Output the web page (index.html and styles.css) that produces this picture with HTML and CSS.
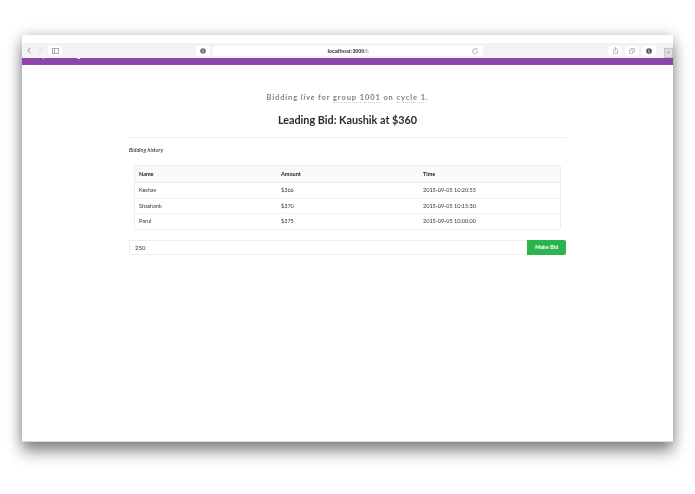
FILE: index.html
```html
<!DOCTYPE html>
<html lang="en">
<head>
<meta charset="utf-8">
<title>Bidding</title>
<link rel="stylesheet" href="styles.css">
</head>
<body>
<div class="window">
  <div class="titlebar"></div>
  <div class="toolbar">
    <div class="tb-left">
      <svg class="ico-nav" width="16" height="7" viewBox="0 0 16 7"><path d="M3.500 .8.800 3.500l2.700 2.700" fill="none" stroke="#777" stroke-width=".9"/><path d="M12 .8l2.700 2.700L12 6.200" fill="none" stroke="#d4d4d4" stroke-width=".9"/></svg>
      <div class="tb-btn tb-side"><svg width="7" height="6" viewBox="0 0 7 6"><rect x=".5" y=".5" width="6" height="5" fill="none" stroke="#999" stroke-width=".8"/><path d="M2.500 .5v5" stroke="#999" stroke-width=".8"/></svg></div>
    </div>
    <div class="tb-center">
      <div class="tb-btn tb-info"><svg width="6" height="6" viewBox="0 0 7 7"><circle cx="3.500" cy="3.500" r="3.200" fill="#666"/><rect x="3" y="3" width="1" height="2.500" fill="#fff"/><rect x="3" y="1.500" width="1" height="1" fill="#fff"/></svg></div>
      <div class="address">
        <span class="addr-text"><b>localhost:3000</b>/b</span>
        <svg class="reload" width="6" height="6" viewBox="0 0 6 6"><path d="M4.800 1.600A2.400 2.400 0 1 0 5.400 3" fill="none" stroke="#999" stroke-width=".8"/><path d="M3.800 .6 5.200 .4 5.100 2z" fill="#999"/></svg>
      </div>
    </div>
    <div class="tb-right">
      <div class="tb-btn"><svg width="5" height="7" viewBox="0 0 6 8"><path d="M1.500 3H.5v4.500h5V3H4.500M3 5V.5M1.700 1.700 3 .5l1.300 1.200" fill="none" stroke="#999" stroke-width=".8"/></svg></div>
      <div class="tb-btn"><svg width="6" height="6" viewBox="0 0 7 7"><rect x="2.400" y=".5" width="4" height="4" fill="none" stroke="#aaa" stroke-width=".8"/><rect x=".5" y="2.400" width="4" height="4" fill="#fff" stroke="#aaa" stroke-width=".8"/></svg></div>
      <div class="tb-btn"><svg width="6" height="6" viewBox="0 0 7 7"><circle cx="3.500" cy="3.500" r="3.300" fill="#555"/><rect x="3" y="3" width="1" height="2.500" fill="#fff"/><rect x="3" y="1.500" width="1" height="1" fill="#fff"/></svg></div>
    </div>
    <div class="newtab">+</div>
  </div>
  <nav class="navbar">
    <span class="nav-link nav-first">Policy Pool</span>
    <span class="nav-link">Sign out</span>
  </nav>
  <main class="content">
    <p class="status">Bidding <em>live</em> for <span class="dotted">group 1001</span> on <span class="dotted">cycle 1</span>.</p>
    <h1 class="leading">Leading Bid: Kaushik at $360</h1>
    <hr class="rule">
    <p class="history-label">Bidding history</p>
    <div class="table-wrap">
      <table class="bids">
        <thead><tr><th class="c1">Name</th><th class="c2">Amount</th><th>Time</th></tr></thead>
        <tbody>
          <tr><td>Keshav</td><td>$366</td><td>2015-09-05 10:20:55</td></tr>
          <tr><td>Shashank</td><td>$370</td><td>2015-09-05 10:15:30</td></tr>
          <tr><td>Parul</td><td>$375</td><td>2015-09-05 10:00:00</td></tr>
        </tbody>
      </table>
    </div>
    <div class="bid-form">
      <input class="bid-input" type="text" value="250" aria-label="Bid amount">
      <button class="bid-btn" type="button">Make Bid</button>
    </div>
  </main>
</div>
</body>
</html>
```
FILE: styles.css
```css
html, body { margin: 0; padding: 0; background: #fff; }
body {
  width: 695px;
  height: 494px;
  overflow: hidden;
  font-family: Lato, "Liberation Sans", sans-serif;
  color: #333;
  padding: 35px 0 0 22px;
  box-sizing: border-box;
}
.window {
  width: 651px;
  height: 407px;
  background: #fff;
  display: flex;
  flex-direction: column;
  border-bottom: 1px solid #ddd;
  box-sizing: border-box;
  box-shadow: 0 10px 14px rgba(0,0,0,.42), 0 0 12px rgba(0,0,0,.22);
}
.titlebar { height: 8px; background: #fff; flex: none; }
.toolbar {
  height: 15px;
  flex: none;
  background: #f4f3f4;
  display: flex;
  align-items: center;
  position: relative;
  filter: blur(.4px);
}
.tb-left { display: flex; align-items: center; gap: 5px; padding-left: 5px; width: 174px; box-sizing: border-box; }
.tb-btn {
  width: 14px; height: 10px;
  background: #fff;
  border-radius: 2px;
  display: flex; align-items: center; justify-content: center;
}
.tb-center { display: flex; align-items: center; gap: 3px; }
.address {
  width: 270px; height: 10px;
  background: #fff;
  border-radius: 2px;
  display: flex; align-items: center; justify-content: center;
  position: relative;
}
.addr-text { font: 5.300px/10px "Liberation Sans", sans-serif; color: #888; }
.addr-text b { font-weight: 700; color: #333; }
.reload { position: absolute; right: 5px; top: 2px; }
.tb-right { display: flex; gap: 3px; margin-left: 125px; }
.newtab {
  position: absolute;
  right: 0; top: 5px;
  width: 9px; height: 10px;
  background: #e0e0e0;
  border: 1px solid #c6c6c6;
  box-sizing: border-box;
  font: 7px/8px "Liberation Sans", sans-serif;
  color: #999;
  text-align: center;
}
.navbar {
  height: 7px;
  flex: none;
  background: #8e44ad;
  overflow: hidden;
  display: flex;
  padding-left: 6px;
  gap: 12px;
  filter: blur(.4px);
}
.nav-link {
  font-size: 6.500px;
  font-weight: 700;
  line-height: 8px;
  color: #fff;
  margin-top: -6px;
  height: 8px;
}
.content {
  width: 437px;
  margin: 0 auto;
  padding-top: 28px;
  filter: blur(.4px);
}
.status {
  margin: 0;
  text-align: center;
  font-size: 7.500px;
  font-weight: 700;
  line-height: 10px;
  letter-spacing: .9px;
  color: #808080;
}
.dotted { border-bottom: 1px dotted #ccc; }
.leading {
  margin: 9px 0 0;
  text-align: center;
  font-size: 10.800px;
  line-height: 16px;
  font-weight: 700;
  color: #2b2b2b;
}
.rule { margin: 9px 0 0; border: 0; border-top: 1px solid #eee; }
.history-label {
  margin: 8px 0 0;
  font-size: 5.500px;
  line-height: 8px;
  font-style: italic;
  color: #222;
}
.table-wrap {
  margin: 11px 5px 0;
  border: 1px solid #eceeef;
  border-radius: 2px;
}
.bids {
  width: 100%;
  border-collapse: collapse;
  font-size: 5.500px;
  color: #333;
}
.bids th {
  text-align: left;
  font-weight: 700;
  color: #222;
  background: #f8f9fa;
  height: 16px;
  padding: 0 0 0 4px;
  border-bottom: 1px solid #e9ecef;
}
.bids td {
  height: 14.500px;
  padding: 0 0 0 4px;
  border-top: 1px solid #f0f1f2;
}
.bids tbody tr:first-child td { border-top: 0; }
.c1, .c2 { width: 142px; box-sizing: border-box; }
.bid-form { display: flex; margin-top: 10px; height: 15px; }
.bid-input {
  flex: 1;
  min-width: 0;
  box-sizing: border-box;
  height: 15px;
  border: 1px solid #eceeef;
  border-right: 0;
  padding: 0 0 0 5px;
  font: 6px Lato, sans-serif;
  color: #333;
  background: #fff;
  outline: 0;
}
.bid-btn {
  width: 39px;
  height: 15px;
  padding: 0;
  border: 0;
  border-radius: 0 2px 2px 0;
  background: #2ab44e;
  color: #fff;
  font: 700 5.500px Lato, sans-serif;
}
```
